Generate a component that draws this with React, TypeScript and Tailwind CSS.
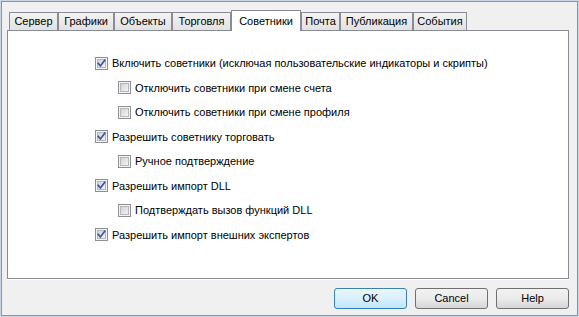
import React from 'react';

const tabs = [
  { label: 'Сервер', w: 'w-[49px]' },
  { label: 'Графики', w: 'w-[56px]' },
  { label: 'Объекты', w: 'w-[58px]' },
  { label: 'Торговля', w: 'w-[59px]' },
  { label: 'Советники', w: 'w-[70px]', active: true },
  { label: 'Почта', w: 'w-[39px]' },
  { label: 'Публикация', w: 'w-[73px]' },
  { label: 'События', w: 'w-[54px]' },
];

const options = [
  { label: 'Включить советники (исключая пользовательские индикаторы и скрипты)', checked: true, sub: false },
  { label: 'Отключить советники при смене счета', checked: false, sub: true },
  { label: 'Отключить советники при смене профиля', checked: false, sub: true },
  { label: 'Разрешить советнику торговать', checked: true, sub: false },
  { label: 'Ручное подтверждение', checked: false, sub: true },
  { label: 'Разрешить импорт DLL', checked: true, sub: false },
  { label: 'Подтверждать вызов функций DLL', checked: false, sub: true },
  { label: 'Разрешить импорт внешних экспертов', checked: true, sub: false },
];

const CheckBox = ({ checked }: { checked: boolean }) => (
  <svg width="13" height="13" viewBox="0 0 13 13" className="shrink-0">
    <defs>
      <linearGradient id="cbfill" x1="0" y1="0" x2="1" y2="1">
        <stop offset="0" stopColor="#cdd1d6" />
        <stop offset="1" stopColor="#f6f6f6" />
      </linearGradient>
    </defs>
    <rect x="0.5" y="0.5" width="12" height="12" fill="#f4f4f4" stroke="#8f8f8f" />
    <rect x="2.5" y="2.5" width="8" height="8" fill="url(#cbfill)" stroke="#b4b8bd" />
    {checked && (
      <path d="M3.2 6.4 L5.4 9 L9.8 3.2" fill="none" stroke="#3f56a0" strokeWidth="1.7" strokeLinecap="square" />
    )}
  </svg>
);

const Button = ({ label, primary }: { label: string; primary?: boolean }) => (
  <div
    className={`w-[73px] h-[21px] flex items-center justify-center rounded-[3px] border text-black ${
      primary
        ? 'border-[#3c7fb1] bg-gradient-to-b from-[#eaf6fd] via-[#d9f0fc] to-[#bee6fd]'
        : 'border-[#707070] bg-gradient-to-b from-[#f2f2f2] via-[#ebebeb] to-[#d6d6d6]'
    }`}
  >
    {label}
  </div>
);

export default function App() {
  return (
    <div className="w-[579px] h-[317px] border border-[#c9d6e6] font-['Liberation_Sans',Arial,sans-serif] text-[11px] text-black">
      <div className="w-full h-full border border-[#8396b0] bg-[#f0f0f0] flex flex-col px-[5px]">
        <div className="flex items-end pl-[2px] pt-[7px] h-[28px] relative z-10">
          {tabs.map((t) =>
            t.active ? (
              <div
                key={t.label}
                className={`${t.w} h-[21px] -mb-px bg-white border border-b-0 border-[#898c95] flex items-center justify-center`}
              >
                {t.label}
              </div>
            ) : (
              <div
                key={t.label}
                className={`${t.w} h-[18px] border border-b-0 border-[#898c95] bg-gradient-to-b from-[#f3f3f3] to-[#e2e2e2] flex items-center justify-center`}
              >
                {t.label}
              </div>
            )
          )}
        </div>
        <div className="w-[562px] h-[249px] bg-white border border-[#898c95] shadow-[0_1px_0_#ffffff] pt-[20px] pl-[87px] flex flex-col">
          {options.map((o) => (
            <div key={o.label} className={`h-[24.5px] flex items-center gap-[4px] ${o.sub ? 'pl-[23px]' : ''}`}>
              <CheckBox checked={o.checked} />
              <span className="whitespace-nowrap">{o.label}</span>
            </div>
          ))}
        </div>
        <div className="flex justify-end gap-[8px] mt-[9px] w-[562px]">
          <Button label="OK" primary />
          <Button label="Cancel" />
          <Button label="Help" />
        </div>
      </div>
    </div>
  );
}
